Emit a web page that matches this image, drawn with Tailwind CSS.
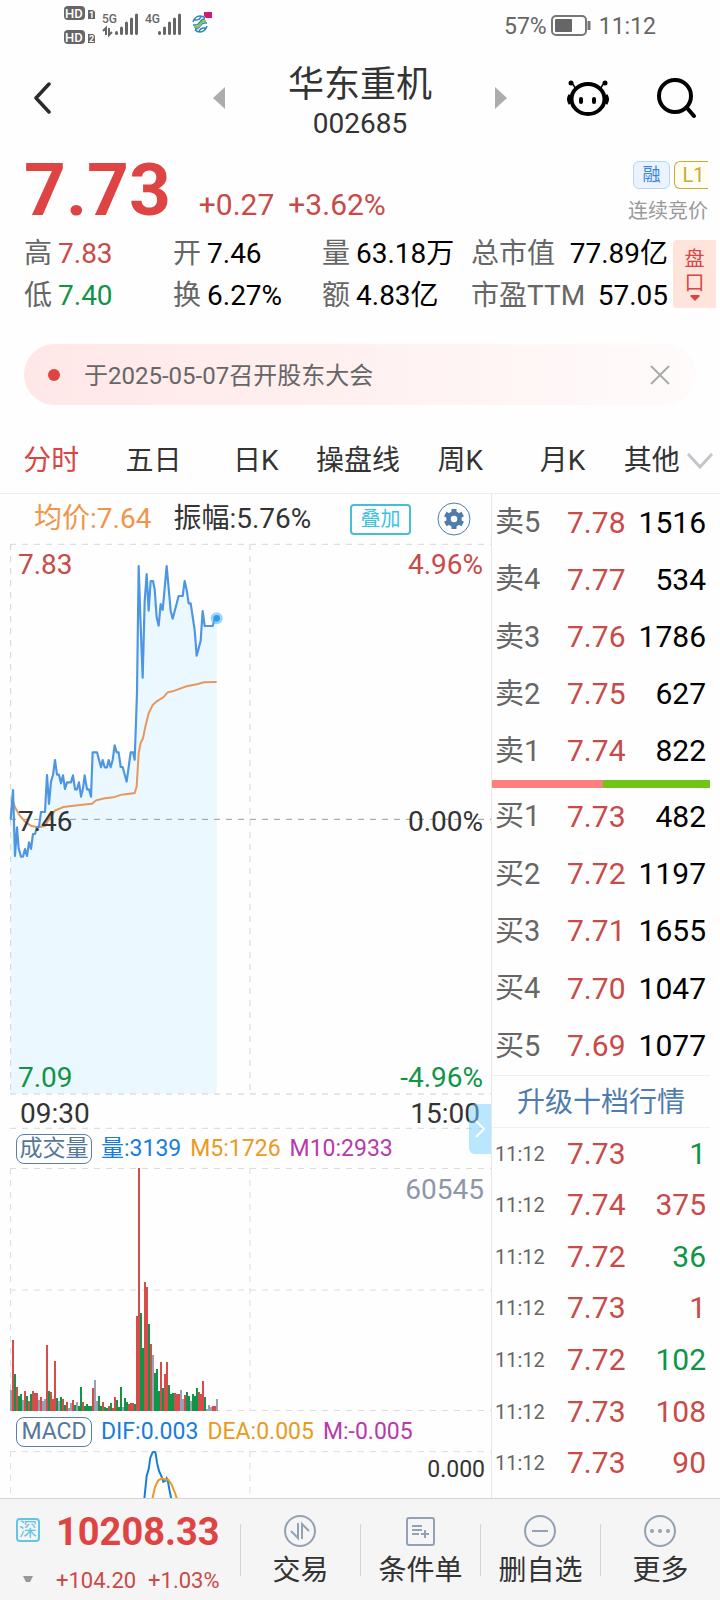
<!DOCTYPE html>
<html lang="zh-CN">
<head>
    <meta charset="UTF-8">
    <meta name="viewport" content="width=device-width, initial-scale=1.0">
    <title>华东重机 002685</title>
    <script src="https://cdn.jsdelivr.net/npm/@tailwindcss/browser@4"></script>
</head>
<body class="bg-[#fefefe] text-[#333] font-['Roboto','Noto_Sans_CJK_SC',sans-serif] min-h-screen flex flex-col overflow-x-hidden">

    <!-- Status bar -->
    <div class="h-12 flex justify-between pl-16 pr-16 text-[#666]">
        <svg class="w-[152px] h-12" viewBox="64 0 152 48" fill="#666" font-family="Roboto" font-weight="700">
            <rect x="64" y="6" width="21" height="14" rx="4" />
            <rect x="64" y="30" width="21" height="14" rx="4" />
            <text x="65" y="18" font-size="13" font-weight="500" fill="#fff">HD</text>
            <text x="65" y="42" font-size="13" font-weight="500" fill="#fff">HD</text>
            <path d="M88 10h5l2 2v7h-7zM88 34h5l2 2v7h-7z" />
            <text x="89" y="18" font-size="9" fill="#fff">1</text>
            <text x="89" y="42" font-size="9" fill="#fff">2</text>
            <text x="102" y="23" font-size="12" font-weight="500">5G</text>
            <text x="145" y="23" font-size="12" font-weight="500">4G</text>
            <path d="M103 31l3-3v7M109 28v7l3-3" fill="none" stroke="#666" stroke-width="2" />
            <g stroke="#666" stroke-width="3" stroke-linecap="round">
                <path d="M116.500 32.500v1M121.500 28v5.500M126.500 23v10.500M131.500 19v14.500M136.500 15v18.500" />
                <path d="M159.500 32.500v1M164.500 28v5.500M169.500 23v10.500M174.500 19v14.500M179.500 15v18.500" />
            </g>
            <g fill="none" stroke-width="1.500">
                <path d="M193 22q2-6 7-6q3 0 5 2M193 25h3q2 0 4-3t5-3M207 26q-2 6-7 6q-3 0-5-2M207 23h-3q-2 0-4 3t-5 3M194 20h3q2 0 4-3M206 28h-3q-2 0-4 3" stroke="#2b86b8" />
                <path d="M194 27h3q2 0 3.500-3t5.500-3" stroke="#8cc152" stroke-width="2" />
            </g>
            <path d="M204 12h8v6h-6l-2-2z" fill="#d6167f" />
        </svg>
        <div class="flex items-center gap-1 pt-1 text-[23px] leading-none">
            <span>57%</span>
            <svg class="w-10 h-[22px]" viewBox="0 0 40 22" fill="none">
                <rect x="1" y="1" width="34" height="19" rx="4" stroke="#777" stroke-width="2" />
                <rect x="4" y="4" width="17" height="13" rx="1" fill="#666" />
                <path d="M38 6v9" stroke="#777" stroke-width="3" />
            </svg>
            <span class="ml-1">11:12</span>
        </div>
    </div>

    <!-- Title bar -->
    <header class="h-[100px] grid grid-cols-[1fr_auto_1fr] items-center">
        <div class="flex items-center justify-between pl-[33px] pr-[63px]">
            <button aria-label="返回">
                <svg class="w-5 h-8" viewBox="0 0 20 32" fill="none" stroke="#2b2b2b" stroke-width="3.500" stroke-linecap="round" stroke-linejoin="round"><path d="M16 2L3 16l13 14" /></svg>
            </button>
            <button aria-label="上一只">
                <svg class="w-3 h-[22px]" viewBox="0 0 12 22" fill="#adadad"><path d="M12 0v22L0 11z" /></svg>
            </button>
        </div>
        <div class="text-center pt-2.5">
            <h1 class="text-4xl leading-[42px]">华东重机</h1>
            <p class="text-[28px] leading-9">002685</p>
        </div>
        <div class="flex items-center pl-[63px] pr-[22px]">
            <button aria-label="下一只">
                <svg class="w-3 h-[22px]" viewBox="0 0 12 22" fill="#adadad"><path d="M0 0v22l12-11z" /></svg>
            </button>
            <button class="ml-auto" aria-label="助手">
                <svg class="w-[42px] h-10" viewBox="0 0 42 40" fill="none" stroke="#000">
                    <ellipse cx="21" cy="21" rx="16.500" ry="15" stroke-width="4" />
                    <path d="M3 17q-3 4 0 9M39 17q3 4 0 9" stroke-width="3" />
                    <path d="M5 5l4 6M37 5l-4 6" stroke-width="1.500" />
                    <g fill="#000" stroke="none">
                        <circle cx="4" cy="5" r="2.500" />
                        <circle cx="38" cy="5" r="2.500" />
                        <rect x="12" y="19" width="4" height="7" rx="2" />
                        <rect x="25" y="19" width="4" height="7" rx="2" />
                    </g>
                </svg>
            </button>
            <button class="ml-[47px]" aria-label="搜索">
                <svg class="w-[42px] h-[42px]" viewBox="0 0 42 42" fill="none" stroke="#000" stroke-width="4" stroke-linecap="round"><circle cx="19" cy="19" r="16" /><path d="M31 31l7 8" /></svg>
            </button>
        </div>
    </header>

    <!-- Price -->
    <section class="h-[82px] flex justify-between pl-6 pr-3">
        <div class="flex items-baseline text-[#c94a48] text-3xl leading-[85px]">
            <strong class="text-[73px] font-bold text-[#df4444] leading-[85px]">7.73</strong>
            <span class="ml-7">+0.27</span>
            <span class="ml-3.5">+3.62%</span>
        </div>
        <div class="flex flex-col items-end pt-[13px]">
            <div class="flex gap-1 text-lg leading-[26px] text-center overflow-hidden">
                <span class="w-[37px] border border-[#b9d6f5] bg-[#eaf3fe] text-[#3b86dd] rounded-md">融</span>
                <span class="w-[34px] border border-r-0 border-[#c7aa3c] bg-[#fffdf0] text-[#c7aa3c] rounded-l-md text-xl leading-[26px] pl-1">L1</span>
            </div>
            <p class="text-xl leading-7 mt-2 text-[#999]">连续竞价</p>
        </div>
    </section>

    <section class="flex items-center pl-6 pr-1">
        <dl class="flex-1 pt-[3px] grid grid-cols-[149fr_149fr_149fr_197fr] text-[28px] leading-[42px] text-black whitespace-nowrap">
            <div class="flex gap-1.5"><dt class="text-[#666]">高</dt><dd class="text-[#c94a48]">7.83</dd></div>
            <div class="flex gap-1.5"><dt class="text-[#666]">开</dt><dd>7.46</dd></div>
            <div class="flex gap-1.5"><dt class="text-[#666]">量</dt><dd>63.18万</dd></div>
            <div class="flex justify-between"><dt class="text-[#666]">总市值</dt><dd>77.89亿</dd></div>
            <div class="flex gap-1.5"><dt class="text-[#666]">低</dt><dd class="text-[#0f9448]">7.40</dd></div>
            <div class="flex gap-1.5"><dt class="text-[#666]">换</dt><dd>6.27%</dd></div>
            <div class="flex gap-1.5"><dt class="text-[#666]">额</dt><dd>4.83亿</dd></div>
            <div class="flex justify-between"><dt class="text-[#666]">市盈TTM</dt><dd>57.05</dd></div>
        </dl>
        <button class="ml-[5px] w-[43px] h-[68px] bg-[#fee4db] text-[#d94543] rounded-l flex flex-col items-center pt-[7px] text-xl leading-6">
            <span>盘</span><span>口</span>
            <svg class="w-2.5 h-1.5" viewBox="0 0 10 6" fill="#d94543"><path d="M1 0h8l1 1-5 5-5-5z" /></svg>
        </button>
    </section>

    <!-- Notice -->
    <div class="mx-6 mt-[27px] h-[61px] rounded-full bg-linear-to-r from-[#ffe7e7] to-[#fffbfb] flex items-center pl-6 pr-[25px]">
        <span class="size-3 rounded-full bg-[#df4444]"></span>
        <a href="#" class="ml-6 pt-0.5 flex-1 text-2xl text-[#666]">于2025-05-07召开股东大会</a>
        <button aria-label="关闭">
            <svg class="size-[22px]" viewBox="0 0 22 22" stroke="#aaa" stroke-width="2"><path d="M2 2l18 18M20 2L2 20" /></svg>
        </button>
    </div>

    <!-- Chart tabs -->
    <nav class="mt-5 pt-[3px] h-[69px] border-b border-[#eee] grid grid-cols-[repeat(6,102fr)_106fr] items-center text-[28px] whitespace-nowrap">
        <button class="text-[#d94543]">分时</button>
        <button>五日</button>
        <button>日K</button>
        <button>操盘线</button>
        <button>周K</button>
        <button>月K</button>
        <button class="flex items-center gap-1.5 pl-2.5">其他
            <svg class="w-7 h-4" viewBox="0 0 28 16" fill="none" stroke="#c4c4cc" stroke-width="3"><path d="M2 1l12 13L26 1" /></svg>
        </button>
    </nav>

    <main class="flex">
        <div class="relative flex-1 min-w-0 pl-2.5 flex flex-col">
            <div class="h-[50px] flex items-center pl-6 pr-5 text-[28px] whitespace-nowrap">
                <span class="text-[#f0954a]">均价:7.64</span>
                <span class="ml-[22px]">振幅:5.76%</span>
                <button class="ml-auto w-[61px] h-[31px] border-2 border-[#43bfd6] rounded text-[20px] leading-[26px] text-[#3cc4de]">叠加</button>
                <button class="ml-[26px]" aria-label="设置">
                    <svg class="size-[34px]" viewBox="0 0 34 34" fill="none">
                        <circle cx="17" cy="17" r="16" stroke="#4f7cac" />
                        <circle cx="17" cy="17" r="5.500" stroke="#4f7cac" stroke-width="4.500" />
                        <path d="M17 7v4M17 23v4M8.300 12l3.500 2M22.200 20l3.500 2M8.300 22l3.500-2M22.200 14l3.500-2" stroke="#4f7cac" stroke-width="5" />
                    </svg>
                </button>
            </div>

            <!-- Price chart -->
            <div class="relative h-[550px] text-[28px] leading-8">
                <svg class="w-full h-full overflow-visible" viewBox="0 0 1443 1650" preserveAspectRatio="none" fill="none">
                    <path id="area" fill="#ecf8ff" />
                    <path d="M0 1H1443M0 1650H1443M0 1753H1443" stroke="#dedede" stroke-width="4" stroke-dasharray="18 18" />
                    <path d="M2 0V1650M720 0V1650" stroke="#d4d4d4" stroke-width="3" stroke-dasharray="18 18" />
                    <path d="M0 826H1443" stroke="#999" stroke-width="3" stroke-dasharray="18 18" />
                    <polyline stroke="#e8975a" stroke-width="6" points="9,773 15,790 30,816 48,836 65,846 85,850 105,846 120,820 135,800 160,789 210,783 246,779 258,769 285,763 310,760 335,752 374,747 380,728 386,628 392,596 399,583 406,548 416,508 428,483 440,472 460,460 473,445 488,442 510,434 530,427 560,421 582,415 620,414" />
                    <polyline id="price" stroke="#4c96e4" stroke-width="6.500" stroke-linejoin="round" points="2,826 9,738 15,936 21,850 26,913 33,938 39,938 45,915 51,936 57,895 63,915 69,870 75,870 81,850 87,848 93,804 105,804 111,693 117,780 123,713 129,693 135,648 141,692 147,692 153,718 159,694 165,735 171,715 183,715 189,694 195,736 201,736 207,715 213,758 219,733 224,694 231,736 237,736 243,758 248,625 261,625 273,670 278,648 284,670 291,670 296,648 302,670 308,648 314,604 320,625 326,625 332,669 338,669 350,713 362,625 369,625 374,647 381,448 386,66 391,218 398,401 404,173 410,90 416,200 422,111 429,111 434,136 440,220 446,245 452,180 458,198 464,133 470,66 476,133 482,200 488,224 506,156 518,156 524,111 530,138 536,178 542,178 554,258 560,335 572,290 578,201 584,246 608,246 614,226 620,223" />
                    <circle cx="620" cy="223" r="18" fill="#5bb8f5" fill-opacity=".6" />
                    <circle cx="620" cy="223" r="10" fill="#2b9df0" />
                </svg>
                <div class="absolute inset-0 pl-2 pr-2 pt-[5px] flex flex-col justify-between">
                    <div class="flex justify-between text-[#c94a48]"><span>7.83</span><span>4.96%</span></div>
                    <div class="flex justify-between"><span>7.46</span><span>0.00%</span></div>
                    <div class="flex justify-between text-[#0f9448]"><span>7.09</span><span>-4.96%</span></div>
                </div>
            </div>
            <div class="h-[34px] flex items-center justify-between pl-2.5 pr-[11px] pt-1.5 text-[28px]"><span>09:30</span><span>15:00</span></div>

            <!-- Volume -->
            <div class="h-10 flex items-center pl-1.5 pt-0.5 text-[23px] leading-7 whitespace-nowrap">
                <button class="w-[76px] h-[30px] border border-[#5b7fa6] rounded-lg text-[#557799] leading-7">成交量</button>
                <span class="ml-[9px] text-[#177ddc]">量:3139</span>
                <span class="ml-[9px] text-[#ea9a22]">M5:1726</span>
                <span class="ml-[9px] text-[#b83aaa]">M10:2933</span>
            </div>
            <div class="relative h-[243px]">
                <svg class="w-full h-full" viewBox="0 0 481 243" preserveAspectRatio="none" fill="none">
                    <path d="M0 .5H481M0 122H481M0 242.500H481M.5 0V243M240 0V243" stroke="#dcdcdc" stroke-dasharray="6 6" />
                    <g id="volume"></g>
                </svg>
                <span class="absolute right-[7px] top-1.5 text-[28px] leading-8 text-[#8e97a8]">60545</span>
            </div>

            <!-- MACD -->
            <div class="h-10 flex items-center pl-1.5 pt-0.5 text-[23px] leading-7 whitespace-nowrap">
                <button class="w-[76px] h-[30px] border border-[#5b7fa6] rounded-lg text-[#557799] leading-7">MACD</button>
                <span class="ml-[9px] text-[#177ddc]">DIF:0.003</span>
                <span class="ml-[9px] text-[#ea9a22]">DEA:0.005</span>
                <span class="ml-[9px] text-[#b83aaa]">M:-0.005</span>
            </div>
            <div class="relative h-[47px]">
                <svg class="w-full h-full" viewBox="0 0 1443 141" preserveAspectRatio="none" fill="none">
                    <path d="M0 2H1443M2 0V141M720 0V141" stroke="#dcdcdc" stroke-width="3" stroke-dasharray="18 18" />
                    <polyline stroke="#177ddc" stroke-width="6" points="403,144 410,75 416,55 421,20 428,4 434,2 437,7 441,35 447,60 456,80 460,92 466,90 470,82 474,92 478,115 484,144" />
                    <polyline stroke="#ea9a22" stroke-width="6" points="427,144 435,108 445,88 456,82 465,86 475,86 485,101 495,126 501,144" />
                </svg>
                <span class="absolute right-1.5 top-[5px] text-[23px] leading-7">0.000</span>
            </div>

            <button class="absolute right-0 top-[610px] w-[22px] h-[50px] bg-[#73cfff]/50 rounded-l-md flex items-center justify-center" aria-label="展开">
                <svg class="w-3 h-[18px]" viewBox="0 0 12 18" fill="none" stroke="#fff" stroke-width="2"><path d="M2 1l8 8-8 8" /></svg>
            </button>
        </div>

        <!-- Order book -->
        <aside class="w-[229px] border-l border-[#e6e6e6] pr-2.5 text-3xl">
            <table class="w-full h-[286px]"><tbody id="asks"></tbody></table>
            <div class="flex h-2"><div class="bg-[#ff7f7f]" style="width: 51%"></div><div class="flex-1 bg-[#72c418]"></div></div>
            <table class="w-full h-[287px]"><tbody id="bids"></tbody></table>
            <a href="#" class="block h-[53px] border-y border-[#f0f0f0] text-center text-[28px] leading-[53px] text-[#4f7cac]">升级十档行情</a>
            <table class="w-full h-[361px]"><tbody id="ticks"></tbody></table>
        </aside>
    </main>

    <!-- Bottom bar -->
    <footer class="flex-1 min-h-[101px] border-t border-[#d4d4d4] bg-[#f5f5f5] grid grid-cols-[2fr_1fr_1fr_1fr_1fr] items-center text-[28px] leading-9">
        <div class="h-full flex pl-4 gap-4">
            <div class="w-6 flex flex-col items-center pt-[19px]">
                <span class="size-6 border-2 border-[#62c6e0] rounded-sm text-[18px] leading-5 text-center text-[#62c6e0] flex justify-center">深</span>
                <svg class="w-2.5 h-1.5 mt-[34px]" viewBox="0 0 10 6" fill="#999"><path d="M0 0h10L7 6H3z" /></svg>
            </div>
            <div class="pt-3 text-[#c94a48] whitespace-nowrap">
                <strong class="block text-[38px] leading-[42px] font-bold text-[#df4444]">10208.33</strong>
                <p class="mt-3.5 text-[22px] leading-7 flex gap-3"><span>+104.20</span><span>+1.03%</span></p>
            </div>
        </div>
        <div class="h-[52px] border-l border-[#d4d4d4] flex items-center justify-center">
            <button class="flex flex-col items-center gap-1.5 pt-1">
                <svg class="size-8" viewBox="0 0 32 32" fill="none" stroke="#93a2b3" stroke-width="2"><circle cx="16" cy="16" r="15" /><path d="M7 16l7 7V8M18 24V9l7 7" /></svg>
                交易
            </button>
        </div>
        <div class="h-[52px] border-l border-[#d4d4d4] flex items-center justify-center">
            <button class="flex flex-col items-center gap-1.5 pt-1">
                <svg class="size-8" viewBox="0 0 32 32" fill="none" stroke="#93a2b3" stroke-width="2"><rect x="3" y="3" width="27" height="27" rx="2" /><path d="M8 11h10M8 15h10M8 19h7M17 19h8M21 15v8" /></svg>
                条件单
            </button>
        </div>
        <div class="h-[52px] border-l border-[#d4d4d4] flex items-center justify-center">
            <button class="flex flex-col items-center gap-1.5 pt-1">
                <svg class="size-8" viewBox="0 0 32 32" fill="none" stroke="#93a2b3" stroke-width="2"><circle cx="16" cy="16" r="15" /><path d="M8 16h16" /></svg>
                删自选
            </button>
        </div>
        <div class="h-[52px] border-l border-[#d4d4d4] flex items-center justify-center">
            <button class="flex flex-col items-center gap-1.5 pt-1">
                <svg class="size-8" viewBox="0 0 32 32" fill="none" stroke="#93a2b3" stroke-width="2"><circle cx="16" cy="16" r="15" /><g fill="#93a2b3" stroke="none"><circle cx="8" cy="16" r="2" /><circle cx="16" cy="16" r="2" /><circle cx="24" cy="16" r="2" /></g></svg>
                更多
            </button>
        </div>
    </footer>

    <script>
        const asks = [["卖5", "7.78", 1516], ["卖4", "7.77", 534], ["卖3", "7.76", 1786], ["卖2", "7.75", 627], ["卖1", "7.74", 822]];
        const bids = [["买1", "7.73", 482], ["买2", "7.72", 1197], ["买3", "7.71", 1655], ["买4", "7.70", 1047], ["买5", "7.69", 1077]];
        const ticks = [["7.73", 1, "g"], ["7.74", 375, "r"], ["7.72", 36, "g"], ["7.73", 1, "r"], ["7.72", 102, "g"], ["7.73", 108, "r"], ["7.73", 90, "r"]];

        const bookRow = ([label, price, qty]) => `
            <tr>
                <th class="font-normal text-left text-[29px] text-[#666] pl-[3px]">${label}</th>
                <td class="w-[60px] text-[#c94a48]">${price}</td>
                <td class="w-[83px] text-right text-black pr-1">${qty}</td>
            </tr>`;
        document.getElementById("asks").innerHTML = asks.map(bookRow).join("");
        document.getElementById("bids").innerHTML = bids.map(bookRow).join("");
        document.getElementById("ticks").innerHTML = ticks.map(([price, qty, side]) => `
            <tr>
                <th class="font-normal text-left text-xl text-[#666] pl-[3px]">11:12</th>
                <td class="w-[60px] text-[#c94a48]">${price}</td>
                <td class="w-[83px] text-right pr-1 ${side === "g" ? "text-[#0f9448]" : "text-[#c94a48]"}">${qty}</td>
            </tr>`).join("");

        // one bar per minute: r = up, g = down, y = flat
        const volume = "y21 r71 g37 r24 g15 g17 y11 r20 g15 r10 g17 r20 r18 r18 y11 r14 y10 y12 r66 g20 r19 r12 r50 g13 y10 g14 r12 g6 r9 y3 y8 r11 g6 y9 g5 g24 r9 g5 g7 g5 g5 r23 y31 y10 g15 g5 r9 g4 g3 r5 g8 r3 r14 g11 g4 g24 y4 g13 g9 r7 r8 r8 g7 r95 r243 g98 g63 r129 r124 g87 r67 y56 g38 g42 g20 r49 g23 r37 r49 g26 g17 g18 r18 r17 r17 y21 y12 r16 g19 g15 y10 g17 g15 g23 r19 r17 r30 g14 y2 y6 y4 r5 r5 y12";
        const colors = { r: "#d64c4a", g: "#0f9448", y: "#98a0b3" };
        document.getElementById("volume").innerHTML = volume.split(" ").map((bar, i) => {
            const h = Number(bar.slice(1));
            return `<rect x="${i * 2}" y="${243 - h}" width="2" height="${h}" fill="${colors[bar[0]]}" />`;
        }).join("");

        const line = document.getElementById("price").getAttribute("points");
        document.getElementById("area").setAttribute("d", `M2 1650L${line} 620,1650Z`);
    </script>
</body>
</html>
